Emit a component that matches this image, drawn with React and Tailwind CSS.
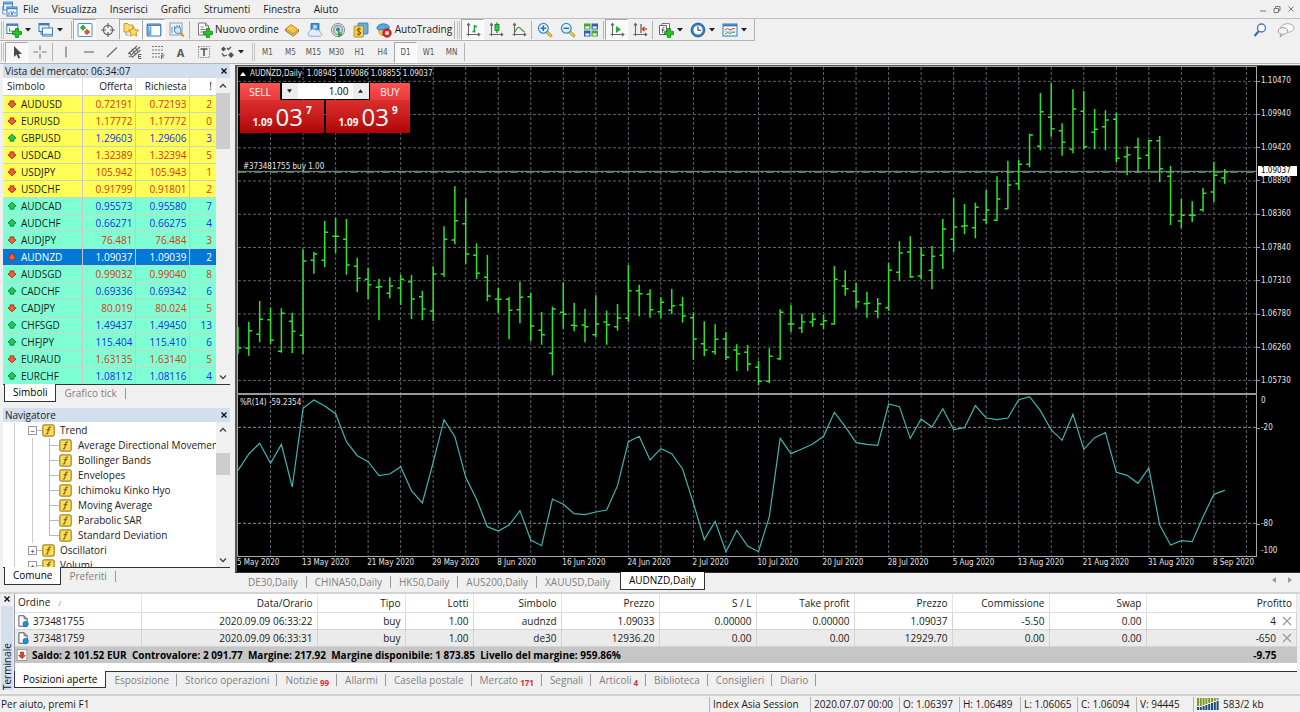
import React from "react";

/* ---------- data ---------- */

const menus = ["File", "Visualizza", "Inserisci", "Grafici", "Strumenti", "Finestra", "Aiuto"];
const timeframes = ["M1", "M5", "M15", "M30", "H1", "H4", "D1", "W1", "MN"];

// symbol, bid, ask, spread, direction, group
const quotes = [
  ["AUDUSD", "0.72191", "0.72193", 2, "down", "major"],
  ["EURUSD", "1.17772", "1.17772", 0, "down", "major"],
  ["GBPUSD", "1.29603", "1.29606", 3, "up", "major"],
  ["USDCAD", "1.32389", "1.32394", 5, "down", "major"],
  ["USDJPY", "105.942", "105.943", 1, "down", "major"],
  ["USDCHF", "0.91799", "0.91801", 2, "down", "major"],
  ["AUDCAD", "0.95573", "0.95580", 7, "up", "cross"],
  ["AUDCHF", "0.66271", "0.66275", 4, "up", "cross"],
  ["AUDJPY", "76.481", "76.484", 3, "down", "cross"],
  ["AUDNZD", "1.09037", "1.09039", 2, "down", "selected"],
  ["AUDSGD", "0.99032", "0.99040", 8, "down", "cross"],
  ["CADCHF", "0.69336", "0.69342", 6, "up", "cross"],
  ["CADJPY", "80.019", "80.024", 5, "down", "cross"],
  ["CHFSGD", "1.49437", "1.49450", 13, "up", "cross"],
  ["CHFJPY", "115.404", "115.410", 6, "up", "cross"],
  ["EURAUD", "1.63135", "1.63140", 5, "down", "cross"],
  ["EURCHF", "1.08112", "1.08116", 4, "up", "cross"],
];

const trendIndicators = [
  "Average Directional Movemen",
  "Bollinger Bands",
  "Envelopes",
  "Ichimoku Kinko Hyo",
  "Moving Average",
  "Parabolic SAR",
  "Standard Deviation",
];

const priceLabels = ["1.10470", "1.09940", "1.09420", "1.08890", "1.08360", "1.07840", "1.07310", "1.06780", "1.06260", "1.05730"];
const dateLabels = [
  "5 May 2020", "13 May 2020", "21 May 2020", "29 May 2020", "8 Jun 2020", "16 Jun 2020", "24 Jun 2020", "2 Jul 2020",
  "10 Jul 2020", "20 Jul 2020", "28 Jul 2020", "5 Aug 2020", "13 Aug 2020", "21 Aug 2020", "31 Aug 2020", "8 Sep 2020",
];

// [high, low, open, close] as plot levels, growing downwards
const barsMayJul = [
  [438, 518, 501, 501], [423, 524, 502, 449], [360, 484, 460, 415], [380, 489, 416, 478], [382, 515, 511, 397],
  [395, 516, 421, 451], [205, 519, 463, 240], [212, 278, 238, 219], [120, 258, 238, 154], [110, 215, 166, 166],
  [114, 281, 175, 252], [230, 333, 256, 292], [261, 355, 295, 311], [294, 418, 319, 317], [289, 352, 337, 315],
  [281, 372, 321, 295], [282, 414, 302, 354], [330, 418, 347, 384], [256, 420, 390, 279], [136, 288, 279, 175],
  [16, 190, 177, 119], [52, 249, 128, 219], [187, 294, 223, 277], [222, 361, 289, 345], [321, 396, 354, 355],
  [348, 475, 355, 388], [302, 427, 386, 349], [336, 481, 347, 435], [393, 491, 448, 461], [377, 583, 517, 384],
  [304, 443, 394, 400], [366, 451, 433, 434], [384, 484, 432, 437], [343, 468, 461, 429], [389, 491, 423, 431],
  [369, 449, 437, 411], [252, 422, 412, 329], [311, 406, 329, 338], [325, 410, 340, 386], [349, 412, 392, 364],
  [324, 399, 388, 374], [348, 425, 372, 405], [394, 536, 410, 474], [421, 525, 488, 507], [430, 521, 512, 475],
  [454, 537, 474, 529], [490, 570, 507, 518], [492, 570, 514, 549], [539, 613, 559, 601], [502, 607, 601, 526],
  [385, 538, 533, 394], [372, 453, 429, 429], [399, 456, 441, 423], [395, 437, 423, 415], [402, 444, 430, 419],
  [255, 431, 429, 295], [268, 344, 315, 323], [306, 381, 331, 362], [332, 410, 368, 367], [351, 412, 391, 368],
  [246, 390, 380, 268], [181, 299, 274, 216], [166, 291, 213, 287], [198, 294, 285, 223], [195, 325, 268, 226],
  [114, 264, 223, 144],
];
const barsAugSep = [
  [405, 567, 529, 492], [423, 514, 490, 488], [419, 526, 494, 433], [381, 483, 470, 441], [340, 473, 472, 408],
  [293, 438, 437, 366], [291, 381, 362, 304], [212, 313, 304, 216], [90, 262, 250, 146], [61, 221, 163, 197],
  [181, 278, 203, 238], [79, 271, 259, 138], [84, 259, 145, 251], [138, 259, 208, 199], [142, 262, 191, 171],
  [149, 297, 169, 286], [250, 337, 281, 275], [224, 328, 253, 286], [231, 318, 277, 233], [219, 358, 233, 317],
  [309, 486, 340, 456], [408, 495, 474, 457], [415, 477, 457, 457], [375, 446, 440, 391], [296, 417, 387, 337],
  [318, 362, 345, 327],
];
const shift = (rows, by) => rows.map((row) => row.map((v) => v + by));
const bars = [...shift(barsMayJul, 342), ...shift(barsAugSep, -12)];

// Williams %R levels, one per bar
const percentR = [
  256, 207, 175, 235, 178, 306, 70, 45, 63, 86, 170, 212, 230, 272, 267, 245, 317, 354, 232, 104, 155, 277, 343, 425,
  438, 420, 377, 465, 482, 342, 358, 386, 389, 381, 375, 302, 170, 154, 225, 191, 206, 252, 355, 464, 409, 500, 436,
  483, 500, 395, 160, 206, 192, 177, 154, 82, 125, 173, 178, 181, 57, 65, 160, 102, 126, 71, 134, 128, 62, 99, 104, 99,
  44, 35, 77, 135, 166, 88, 193, 158, 143, 262, 271, 295, 249, 420, 480, 467, 470, 395, 328, 316,
];

const STEP = 32.53;
const PLOT_W = 3054;

const orderColumns = [
  ["Ordine", "w-[126px]"],
  ["Data/Orario", "w-[176px]"],
  ["Tipo", "w-[88px]"],
  ["Lotti", "w-[68px]"],
  ["Simbolo", "w-[88px]"],
  ["Prezzo", "w-[98px]"],
  ["S / L", "w-[97px]"],
  ["Take profit", "w-[98px]"],
  ["Prezzo", "w-[98px]"],
  ["Commissione", "w-[97px]"],
  ["Swap", "w-[97px]"],
  ["Profitto", ""],
];
const orders = [
  ["373481755", "2020.09.09 06:33:22", "buy", "1.00", "audnzd", "1.09033", "0.00000", "0.00000", "1.09037", "-5.50", "0.00", "4"],
  ["373481759", "2020.09.09 06:33:31", "buy", "1.00", "de30", "12936.20", "0.00", "0.00", "12929.70", "0.00", "0.00", "-650"],
];

const terminalTabs = [
  ["Esposizione"], ["Storico operazioni"], ["Notizie", 99], ["Allarmi"], ["Casella postale"], ["Mercato", 171],
  ["Segnali"], ["Articoli", 4], ["Biblioteca"], ["Consiglieri"], ["Diario"],
];
const chartTabs = ["DE30,Daily", "CHINA50,Daily", "HK50,Daily", "AUS200,Daily", "XAUUSD,Daily"];

/* ---------- icons ---------- */

const Icon = ({ children, className = "w-4 h-4" }) => (
  <svg viewBox="0 0 16 16" className={`shrink-0 ${className}`} fill="none" aria-hidden="true">
    {children}
  </svg>
);

const GreenPlus = () => (
  <svg x="6" y="6" width="10" height="10" viewBox="0 0 10 10">
    <path d="M3.4.6h3.2v2.8h2.8v3.2H6.6v2.8H3.4V6.6H.6V3.4h2.8z" fill="#22c522" stroke="#0b7d12" strokeWidth=".8" />
  </svg>
);

const AppIcon = () => (
  <Icon>
    <rect x="1.5" y="1" width="9" height="8" fill="#dcebfa" stroke="#4a8ac9" />
    <path d="M1.5 2.5h9" stroke="#4a8ac9" strokeWidth="1.6" />
    <rect x="5" y="6" width="10" height="9" fill="#eef6fd" stroke="#3c7fc4" />
    <path d="M5 7.4h10" stroke="#3c7fc4" strokeWidth="1.6" />
    <path d="M7 11v3M9 10l1 4 1.5-4M13 11v2" stroke="#3c7fc4" />
    <path d="M.7 5v8h3" stroke="#6aa0d6" />
  </Icon>
);
const NewChartIcon = () => (
  <Icon>
    <rect x=".8" y="2" width="11" height="9.5" fill="#fff" stroke="#3f7dba" />
    <path d="M.8 3h11" stroke="#3f7dba" strokeWidth="1.8" />
    <path d="M3.5 5.5v4M3 9h6" stroke="#68a03f" />
    <GreenPlus />
  </Icon>
);
const ProfilesIcon = () => (
  <Icon>
    <rect x="1" y="1.5" width="10" height="8" fill="#e8f2fb" stroke="#3f7dba" />
    <path d="M1 2.5h10" stroke="#3f7dba" strokeWidth="1.8" />
    <path d="M3 12h1.5M3 9.5v3" stroke="#3f7dba" />
    <rect x="4.5" y="6" width="10" height="8" fill="#f7fbff" stroke="#3f7dba" />
    <path d="M4.5 12.5h10" stroke="#6ea2d4" strokeWidth="1.4" />
  </Icon>
);
const MarketWatchIcon = () => (
  <Icon>
    <rect x="1" y="1.5" width="14" height="13" rx="1" fill="#fff" stroke="#4a90c8" />
    <path d="M6 3l2.7 2.7L6 8.4 3.3 5.7z" fill="#32b432" stroke="#14801b" strokeWidth=".6" />
    <path d="M10 7.3l2.7 2.7-2.7 2.7L7.300 10z" fill="#ef5035" stroke="#a82512" strokeWidth=".6" />
  </Icon>
);
const TargetIcon = () => (
  <Icon>
    <circle cx="8" cy="8" r="4.6" stroke="#666" strokeWidth="1.3" />
    <path d="M8 1v5M8 10v5M1 8h5M10 8h5" stroke="#666" strokeWidth="1.2" />
  </Icon>
);
const FolderStarIcon = () => (
  <Icon>
    <path d="M1 3V1.5h4L6 3h4v7H1z" fill="#f8dd76" stroke="#b68a1f" strokeWidth=".8" />
    <path d="M3 10v3h3" stroke="#888" strokeWidth=".8" />
    <path d="M10.5 4.6l1.6 3.2 3.5.4-2.6 2.4.7 3.6-3.2-1.8-3.2 1.8.7-3.6-2.6-2.4 3.5-.4z" fill="#ffe14d" stroke="#b68415" strokeWidth=".8" />
  </Icon>
);
const PanelIcon = () => (
  <Icon>
    <rect x="1.2" y="2" width="13.6" height="12" rx="1" fill="#fff" stroke="#3778b5" strokeWidth="1.2" />
    <path d="M1.5 3.2h13" stroke="#3778b5" strokeWidth="1.4" />
    <rect x="2" y="4.4" width="3.4" height="9" fill="#6aa7de" />
    <path d="M3 6h1M3 8h1" stroke="#fff" />
  </Icon>
);
const TesterIcon = () => (
  <Icon>
    <rect x="1" y="1" width="12" height="12" fill="#eef3f8" stroke="#8aa0b5" />
    <path d="M3 11V5M5.5 10V4M8 8V3M10.5 7V3" stroke="#6a89a8" />
    <circle cx="8.8" cy="8.2" r="3.4" fill="#cfe6fa" stroke="#4d88bd" />
    <path d="M11.4 10.8l3.4 3.7" stroke="#cf9a2d" strokeWidth="2" />
  </Icon>
);
const NewOrderIcon = () => (
  <Icon>
    <path d="M1.5 1h7l3 3v9h-10z" fill="#fff" stroke="#777" />
    <path d="M8.5 1v3h3M3.5 5h3M3.5 7.5h5M3.5 10h3" stroke="#777" />
    <GreenPlus />
  </Icon>
);
const GoldBookIcon = () => (
  <Icon>
    <path d="M1.5 7L7 2.5l7.5 5.3-5.2 4.4z" fill="#f5c84c" stroke="#b07a16" strokeWidth=".8" />
    <path d="M1.5 7v2l7.7 5.3 5.3-4.5v-2l-5.2 4.4z" fill="#c98a1f" stroke="#8f6013" strokeWidth=".6" />
    <path d="M2.5 8.2l6.800 4.7 4.6-3.9" stroke="#fff2c4" strokeWidth=".7" />
  </Icon>
);
const CloudUserIcon = () => (
  <Icon>
    <path d="M4 1.5h8v7H4z" fill="#3e92dc" stroke="#2466a8" strokeWidth=".8" />
    <circle cx="8" cy="4.8" r="2" fill="#b6dcfa" />
    <path d="M3 14.3a2.6 2.6 0 010-5 3.4 3.4 0 016-1 3 3 0 014.3 2 2.1 2.1 0 010 4z" fill="#e3edf8" stroke="#7ba0c6" strokeWidth=".8" />
  </Icon>
);
const SignalIcon = () => (
  <Icon>
    <circle cx="8" cy="8" r="6.6" fill="#d9dedb" stroke="#8b9691" />
    <circle cx="8" cy="8" r="4.3" stroke="#7f9a8b" strokeWidth="1.2" />
    <path d="M8 15.5V8l4.8 5z" fill="#2fa64a" />
    <circle cx="8" cy="7.6" r="2" fill="#3d7f9e" />
  </Icon>
);
const MarketIcon = () => (
  <Icon>
    <rect x="5" y="1" width="10" height="11" rx="1" fill="#66aee4" stroke="#2f74ae" strokeWidth=".8" />
    <rect x="1" y="4" width="9.5" height="11" rx="1" fill="#f8cf4e" stroke="#a97c15" strokeWidth=".8" />
    <path d="M7.8 7.2C7 6.4 4 6.3 4 8s3.8 1.2 3.8 3-3 1.6-4 .8M5.9 5.6v8" stroke="#7b560a" />
  </Icon>
);
const AutoTradingIcon = () => (
  <Icon>
    <path d="M2.5 7.5l9-.5c.5 3-1.5 6.500-4.5 6.500S2.5 10 2.5 7.5z" fill="#f6c84a" stroke="#b38019" strokeWidth=".8" />
    <path d="M.8 6.5C1 1 12 0 13.5 5.5 14 7.5 3 9 .8 6.5z" fill="#58a8e0" stroke="#2a6ca5" strokeWidth=".8" />
    <circle cx="11" cy="11" r="4.3" fill="#dc2418" stroke="#9c130b" strokeWidth=".6" />
    <rect x="9.3" y="9.3" width="3.4" height="3.4" fill="#fff" />
  </Icon>
);
const Axes = () => <path d="M3.5 2v12M1.5 12.5h13M2 3.5l1.5-2L5 3.500M13 11l1.800 1.5L13 14" stroke="#666" strokeWidth="1.1" />;
const BarsIcon = () => (
  <Icon>
    <Axes />
    <path d="M9.5 3v7.5M9.5 4.500H12M7.5 9.5h2" stroke="#17a32b" strokeWidth="1.5" />
  </Icon>
);
const CandleIcon = () => (
  <Icon>
    <Axes />
    <path d="M9 .5V11" stroke="#127d1f" strokeWidth="1.2" />
    <rect x="7" y="2.5" width="4" height="6" fill="#2fce3d" stroke="#127d1f" strokeWidth=".8" />
  </Icon>
);
const LineIcon = () => (
  <Icon>
    <Axes />
    <path d="M4 10c2-5 4-6 6-3l3.5 3" stroke="#3e9a47" strokeWidth="1.2" />
  </Icon>
);
const ZoomIcon = ({ plus }) => (
  <Icon>
    <path d="M9.5 9.5l5 5" stroke="#9c7412" strokeWidth="3" />
    <path d="M9.5 9.5l4.7 4.7" stroke="#f2cc4d" strokeWidth="1.8" />
    <circle cx="6.3" cy="6.3" r="4.9" fill="#e3f2fd" stroke="#3c8cc9" strokeWidth="1.3" />
    <path d={plus ? "M3.5 6.3h5.6M6.3 3.5v5.6" : "M3.5 6.3h5.6"} stroke="#2270b0" strokeWidth="1.5" />
  </Icon>
);
const TilesIcon = () => (
  <Icon>
    <rect x="1" y="1.5" width="6.5" height="6" fill="#4aa832" />
    <rect x="8.5" y="1.5" width="6.5" height="6" fill="#2c62b8" />
    <rect x="1" y="8.5" width="6.5" height="6" fill="#2c62b8" />
    <rect x="8.5" y="8.5" width="6.5" height="6" fill="#4aa832" />
    <path d="M2.3 4.5h4v2h-4zM9.7 4.5h4v2h-4zM2.3 11.5h4v2h-4zM9.7 11.5h4v2h-4z" fill="#fff" />
  </Icon>
);
const AutoScrollIcon = () => (
  <Icon>
    <Axes />
    <path d="M7 4v7l5-3.5z" fill="#1fae34" />
  </Icon>
);
const ShiftIcon = () => (
  <Icon>
    <Axes />
    <path d="M9 2v9" stroke="#555" strokeWidth="1.2" />
    <path d="M15 7h-4M12.5 4.800L10.300 7l2.2 2.2" stroke="#cf4a20" strokeWidth="1.3" />
  </Icon>
);
const IndicatorsIcon = () => (
  <Icon>
    <path d="M4 3.500v-2h7.5v9H8" fill="#fff" stroke="#777" />
    <path d="M1.5 3.5h7v9h-7z" fill="#fff" stroke="#666" />
    <path d="M6.500 5.500C5 5 4.700 6 4.700 7v4M3.500 8h3" stroke="#555" />
    <GreenPlus />
  </Icon>
);
const ClockIcon = () => (
  <Icon>
    <circle cx="8" cy="8" r="6.9" fill="#2d7fcb" stroke="#15508f" strokeWidth=".8" />
    <circle cx="8" cy="8" r="4.6" fill="#fff" />
    <path d="M8 4.5v3.8h3" stroke="#333" strokeWidth="1.1" />
  </Icon>
);
const TemplateIcon = () => (
  <Icon>
    <rect x="1" y="2" width="14" height="12" fill="#f2f7fc" stroke="#3a78b8" />
    <path d="M1 3.3h14" stroke="#3a78b8" strokeWidth="2" />
    <path d="M3 8l2.5-1.5L8 8l3-1.5 2 .5" stroke="#b34b33" />
    <path d="M3 12l2.5-1.5L8 11.5l3-1.5 2 .5" stroke="#2f9a3c" />
    <path d="M2.5 9.3h11" stroke="#9ab" strokeWidth=".6" />
  </Icon>
);
const CursorIcon = () => (
  <Icon>
    <path d="M5 2v11l2.6-2.4 1.7 4 1.9-.8-1.7-3.900H13z" fill="#4a4a4a" />
  </Icon>
);
const CrossIcon = () => (
  <Icon>
    <path d="M8 1.5V6M8 10v4.5M1.5 8H6M10 8h4.5M7.5 8h1" stroke="#777" strokeWidth="1.2" />
  </Icon>
);
const StrokeIcon = ({ d }) => (
  <Icon>
    <path d={d} stroke="#666" strokeWidth="1.1" />
  </Icon>
);
const ChannelIcon = () => (
  <Icon>
    <path d="M1 10l9-8M2 13L13 3M5 13.5L13.5 6M2 8l3 5M5 5l3.5 5.5M8 3l3 5" stroke="#666" strokeWidth="1.1" />
    <path d="M14.5 10.5h-3v4h3M11.5 12.5h2.5" stroke="#555" strokeWidth=".9" />
  </Icon>
);
const FiboIcon = () => (
  <Icon>
    <path d="M2 2.5h12M2 6h12M2 9.5h12M2 13h8" stroke="#777" strokeWidth="1.2" strokeDasharray="2 1" />
    <path d="M14.5 11h-3v4M11.5 13h2.5" stroke="#555" strokeWidth=".9" />
  </Icon>
);
const LabelIcon = () => (
  <Icon>
    <rect x="2.5" y="2.5" width="11" height="11" stroke="#888" strokeDasharray="1.5 1" />
    <path d="M4.5 5h7M8 5v7" stroke="#555" strokeWidth="1.6" />
  </Icon>
);
const ArrowsIcon = () => (
  <Icon>
    <path d="M4.5 2.5L7 5 4.5 7.5 2 5z" fill="#555" />
    <path d="M12 8l3 3-3 3-3-3z" fill="#555" />
    <path d="M8 4l1.5 1.5L12 3M3 9.5L5 12l3-1" stroke="#555" strokeWidth="1.3" />
  </Icon>
);
const SearchIcon = () => (
  <Icon>
    <path d="M7 9l-4.5 5" stroke="#4068b0" strokeWidth="2.2" />
    <circle cx="9.5" cy="6" r="4" fill="#fff" stroke="#5578b8" strokeWidth="1.4" />
  </Icon>
);
const ChatIcon = () => (
  <Icon className="w-5 h-4">
    <ellipse cx="9.5" cy="6" rx="6.5" ry="4.3" fill="#fff" stroke="#aaa" />
    <ellipse cx="5" cy="9" rx="4.8" ry="3.4" fill="#f4f4f4" stroke="#999" />
    <path d="M3 12l-1 3 3.5-2.6" fill="#f4f4f4" stroke="#999" />
  </Icon>
);

const QuoteArrow = ({ dir }) => (
  <Icon className="w-[10px] h-[10px]">
    {dir === "up" ? (
      <path d="M8 2l6.500 6-3.500 1.500V13H5V9.500L1.500 8z" fill="#2fc25b" stroke="#0f8436" strokeWidth="1.5" strokeLinejoin="round" />
    ) : (
      <path d="M8 14L1.500 8 5 6.500V3h6v3.500L14.500 8z" fill="#f0603c" stroke="#b02a12" strokeWidth="1.5" strokeLinejoin="round" />
    )}
  </Icon>
);
const FunctionIcon = () => (
  <Icon className="w-[13px] h-[13px]">
    <rect x="1" y="1" width="14" height="14" rx="2" fill="#fbdc5e" stroke="#a98a1e" strokeWidth="1.5" />
    <path d="M11 4.2c-2-1-2.7.5-3 2.300L7.300 10c-.3 1.8-1 2.6-2.6 2M5.800 7h4.4" stroke="#8a6a08" strokeWidth="1.5" />
  </Icon>
);
const OrderIcon = () => (
  <Icon className="w-3 h-3.5">
    <path d="M2.5 1h7l4 4v10h-11z" fill="#fff" stroke="#555" strokeWidth="1.3" />
    <path d="M9.5 1v4h4" stroke="#555" strokeWidth="1.3" />
    <circle cx="11.5" cy="12" r="3.6" fill="#1e90e0" stroke="#0f62a8" strokeWidth=".8" />
  </Icon>
);
const BalanceIcon = () => (
  <Icon className="w-3 h-3">
    <rect x="1.5" y=".7" width="13" height="14.5" fill="#fff" stroke="#888" />
    <path d="M8 13L3.500 8.500H6V4h4v4.500h2.500z" fill="#d8452a" stroke="#96210c" strokeWidth=".8" />
  </Icon>
);
const TrafficIcon = () => (
  <svg viewBox="0 0 22 12" className="w-[22px] h-3 shrink-0" aria-hidden="true">
    {[8, 8, 7, 6, 5, 4, 3, 2].map((y, i) => (
      <g key={i}>
        <rect x={i * 2.8} y="0" width="2" height={y} fill="#7d9a2a" />
        <rect x={i * 2.8} y={y + 1} width="2" height={11 - y} fill="#1a4f7c" />
      </g>
    ))}
  </svg>
);
const SmallIcon = ({ d, stroke = "#777", width = "1" }) => (
  <svg viewBox="0 0 8 8" className="w-2 h-2" fill="none" aria-hidden="true">
    <path d={d} stroke={stroke} strokeWidth={width} />
  </svg>
);
const UP = "M1 5.5l3-3 3 3";
const DOWN = "M1 2.5l3 3 3-3";
const CLOSE = "M1.5 1.5l5 5M6.5 1.5l-5 5";

/* ---------- toolbar ---------- */

const Handle = () => <span className="w-[3px] h-[18px] mx-px border-x border-[#c4c4c4]" />;
const Sep = () => <span className="w-px h-[18px] mx-px bg-[#b4b4b4]" />;

const ToolButton = ({ label, pressed, children }) => (
  <button
    aria-label={label}
    className={`w-[23px] h-[21px] flex items-center justify-center border ${
      pressed ? "bg-[#f8f8f8] border-t-[#a8a8a8] border-l-[#a8a8a8] border-r-white border-b-white" : "border-transparent"
    }`}
  >
    {children}
  </button>
);

const DropButton = ({ label, children }) => (
  <button aria-label={label} className="w-8 h-[21px] flex items-center gap-[3px]">
    {children}
    <svg viewBox="0 0 6 4" className="w-[6px] h-1" aria-hidden="true">
      <path d="M0 0h6L3 3.5z" fill="#222" />
    </svg>
  </button>
);

const Toolbars = () => (
  <>
    <div className="h-[23px] flex items-center border-t border-[#c0c0c0]">
      <div className="flex items-center h-full border-r border-[#b4b4b4] border-b">
        <Handle />
        <span className="w-px" />
        <DropButton label="Nuovo grafico"><NewChartIcon /></DropButton>
        <DropButton label="Profili"><ProfilesIcon /></DropButton>
        <Sep />
        <ToolButton label="Vista del mercato" pressed><MarketWatchIcon /></ToolButton>
        <ToolButton label="Finestra dati"><TargetIcon /></ToolButton>
        <ToolButton label="Navigatore" pressed><FolderStarIcon /></ToolButton>
        <ToolButton label="Terminale" pressed><PanelIcon /></ToolButton>
        <ToolButton label="Strategy tester"><TesterIcon /></ToolButton>
        <Sep />
        <button className="flex items-center gap-[2px] pl-[6px] pr-[2px]">
          <NewOrderIcon />
          Nuovo ordine
        </button>
        <ToolButton label="MetaEditor"><GoldBookIcon /></ToolButton>
        <ToolButton label="Hosting"><CloudUserIcon /></ToolButton>
        <ToolButton label="Segnali"><SignalIcon /></ToolButton>
        <ToolButton label="Mercato"><MarketIcon /></ToolButton>
        <button className="flex items-center gap-[3px] pl-[3px] pr-px">
          <AutoTradingIcon />
          AutoTrading
        </button>
        <Sep />
        <Handle />
        <ToolButton label="Grafico a barre" pressed><BarsIcon /></ToolButton>
        <ToolButton label="Candele"><CandleIcon /></ToolButton>
        <ToolButton label="Grafico a linea"><LineIcon /></ToolButton>
        <Sep />
        <ToolButton label="Zoom avanti"><ZoomIcon plus /></ToolButton>
        <ToolButton label="Zoom indietro"><ZoomIcon /></ToolButton>
        <ToolButton label="Affianca finestre"><TilesIcon /></ToolButton>
        <Sep />
        <ToolButton label="Scorrimento automatico" pressed><AutoScrollIcon /></ToolButton>
        <ToolButton label="Spostamento grafico"><ShiftIcon /></ToolButton>
        <Sep />
        <span className="w-1" />
        <DropButton label="Indicatori"><IndicatorsIcon /></DropButton>
        <DropButton label="Periodi"><ClockIcon /></DropButton>
        <DropButton label="Modelli"><TemplateIcon /></DropButton>
      </div>
      <div className="flex items-center gap-2 ml-auto pr-1">
        <button aria-label="Cerca"><SearchIcon /></button>
        <button aria-label="Chat"><ChatIcon /></button>
      </div>
    </div>
    <div className="h-[23px] flex items-center border-b border-[#b4b4b4]">
      <Handle />
      <ToolButton label="Cursore" pressed><CursorIcon /></ToolButton>
      <ToolButton label="Mirino"><CrossIcon /></ToolButton>
      <Sep />
      <ToolButton label="Linea verticale"><StrokeIcon d="M8 2.5v11" /></ToolButton>
      <ToolButton label="Linea orizzontale"><StrokeIcon d="M3 8h10" /></ToolButton>
      <ToolButton label="Linea di tendenza"><StrokeIcon d="M3 13l10-9.5" /></ToolButton>
      <ToolButton label="Canale"><ChannelIcon /></ToolButton>
      <ToolButton label="Fibonacci"><FiboIcon /></ToolButton>
      <ToolButton label="Testo"><span className="font-bold text-[11px] text-[#555]">A</span></ToolButton>
      <ToolButton label="Etichetta"><LabelIcon /></ToolButton>
      <span className="w-1" />
      <DropButton label="Frecce"><ArrowsIcon /></DropButton>
      <Handle />
      {timeframes.map((tf) => (
        <ToolButton key={tf} label={tf} pressed={tf === "D1"}>
          <span className="[font-family:'DejaVu_Sans_Condensed','DejaVu_Sans',sans-serif] text-[8px] text-[#555]">{tf}</span>
        </ToolButton>
      ))}
      <Sep />
    </div>
  </>
);

/* ---------- left side ---------- */

const PanelTitle = ({ children }) => (
  <div className="h-[14px] flex items-center justify-between pl-[2px] pr-[2px] bg-[#d3dfec]">
    <h2 className="leading-[14px]">{children}</h2>
    <button aria-label="Chiudi"><SmallIcon d={CLOSE} stroke="#111" width="1.4" /></button>
  </div>
);

const ScrollBar = ({ thumb }) => (
  <div className="w-[14px] shrink-0 flex flex-col items-center bg-[#f0f0f0]">
    <span className="h-[15px] flex items-center"><SmallIcon d={UP} stroke="#444" width="1.3" /></span>
    <span className={`w-full bg-[#cdcdcd] ${thumb}`} />
    <span className="h-[15px] mt-auto flex items-center"><SmallIcon d={DOWN} stroke="#444" width="1.3" /></span>
  </div>
);

const SideTabs = ({ active, other }) => (
  <div className="flex items-start pl-px border-t border-[#333] text-[#808080]">
    <button className="h-[18px] -mt-px px-2 bg-white text-black border border-t-0 border-[#333]">{active}</button>
    <button className="h-[17px] flex items-center px-2 after:h-[11px] after:ml-2 after:-mr-2 after:border-r after:border-[#999]">
      {other}
    </button>
  </div>
);

const rowColors = {
  major: "bg-[#ffff55]",
  cross: "bg-[#7fffd4]",
  selected: "bg-[#0078d7] text-white",
};

const MarketWatch = () => (
  <section>
    <PanelTitle>Vista del mercato: 06:34:07</PanelTitle>
    <div className="flex bg-white">
      <table className="flex-1 table-fixed border-collapse leading-4">
        <thead>
          <tr className="h-[17px]">
            <th className="w-[79px] p-0 pl-1 font-normal text-left border-r border-[#e0e0e0]">Simbolo</th>
            <th className="w-[53px] p-0 pr-[2px] font-normal text-right border-r border-[#e0e0e0]">Offerta</th>
            <th className="w-[54px] p-0 pr-[2px] font-normal text-right border-r border-[#e0e0e0]">Richiesta</th>
            <th className="w-[27px] p-0 pr-1 font-normal text-right">!</th>
          </tr>
        </thead>
        <tbody>
          {quotes.map(([symbol, bid, ask, spread, dir, group]) => {
            const color = group === "selected" ? "text-white" : dir === "up" ? "text-[#1a2fe0]" : "text-[#dd3311]";
            const cell = `p-0 text-right border-[#c8c8c8] ${color}`;
            return (
              <tr key={symbol} className={`h-[17px] border-t border-[#c8d8c0] ${rowColors[group]}`}>
                <td className="p-0 pl-1 border-r border-[#c8c8c8]">
                  <span className="flex items-center gap-1">
                    <QuoteArrow dir={dir} />
                    {symbol}
                  </span>
                </td>
                <td className={`${cell} pr-[2px] border-r`}>{bid}</td>
                <td className={`${cell} pr-[2px] border-r`}>{ask}</td>
                <td className={`${cell} pr-1`}>{spread}</td>
              </tr>
            );
          })}
        </tbody>
      </table>
      <ScrollBar thumb="h-14" />
    </div>
    <SideTabs active="Simboli" other="Grafico tick" />
  </section>
);

const TreeGroup = ({ label, sign }) => (
  <li className="h-[15px] flex items-center">
    <span className="w-[14px] h-full ml-[11px] border-l border-[#ccc]" />
    <span className="w-[9px] h-[9px] flex items-center justify-center bg-white border border-[#999] text-[8px] leading-none">
      {sign}
    </span>
    <span className="w-[5px] h-px bg-[#bbb]" />
    <FunctionIcon />
    <span className="pl-[5px]">{label}</span>
  </li>
);

const Navigator = () => (
  <section>
    <PanelTitle>Navigatore</PanelTitle>
    <div className="h-[145px] flex bg-white">
      <ul className="flex-1 min-w-0 pt-px overflow-hidden whitespace-nowrap leading-[15px]">
        <TreeGroup label="Trend" sign="−" />
        {trendIndicators.map((name, i) => (
          <li key={name} className="h-[15px] flex items-center">
            <span className="w-[18px] h-full ml-[11px] shrink-0 border-l border-[#ccc]" />
            <span className="w-[17px] h-full shrink-0 border-l border-[#ccc]" />
            <span className={`w-px shrink-0 bg-[#bbb] ${i === trendIndicators.length - 1 ? "h-2 self-start" : "h-full"}`} />
            <span className="w-[9px] h-px shrink-0 bg-[#bbb]" />
            <FunctionIcon />
            <span className="pl-[6px]">{name}</span>
          </li>
        ))}
        <TreeGroup label="Oscillatori" sign="+" />
        <TreeGroup label="Volumi" sign="+" />
      </ul>
      <ScrollBar thumb="h-[22px] mt-4" />
    </div>
    <SideTabs active="Comune" other="Preferiti" />
  </section>
);

/* ---------- chart ---------- */

const verticals = Array.from({ length: 31 }, (_, i) => (i + 1) * 3 * STEP);
const VerticalGrid = ({ height }) => (
  <path
    d={verticals.map((x) => `M${x} 0V${height}`).join("")}
    stroke="#5c626a"
    strokeDasharray="3 2"
    vectorEffect="non-scaling-stroke"
  />
);

const PricePlot = () => (
  <svg viewBox={`0 0 ${PLOT_W} 978`} preserveAspectRatio="none" className="block w-full h-[326px]" fill="none" role="img" aria-label="AUDNZD Daily">
    <VerticalGrid height={978} />
    <path
      d={priceLabels.map((_, i) => `M0 ${43 + i * 99.7}H${PLOT_W}`).join("")}
      stroke="#5c626a"
      strokeDasharray="3 2"
      vectorEffect="non-scaling-stroke"
    />
    <path d={`M0 313H${PLOT_W}`} stroke="#8a94a0" vectorEffect="non-scaling-stroke" />
    <path d={`M0 316H${PLOT_W}`} stroke="#4f9a58" strokeDasharray="8 3 2 3" vectorEffect="non-scaling-stroke" />
    <path
      d={bars
        .map(([high, low, open, close], i) => {
          const x = i * STEP;
          return `M${x} ${high}V${low}M${x - 10} ${open}H${x}M${x} ${close}H${x + 10}`;
        })
        .join("")}
      stroke="#2be32b"
      strokeWidth="1.5"
      vectorEffect="non-scaling-stroke"
    />
  </svg>
);

const IndicatorPlot = () => (
  <svg viewBox={`0 0 ${PLOT_W} 483`} preserveAspectRatio="none" className="block w-full h-[161px]" fill="none" role="img" aria-label="Williams %R">
    <VerticalGrid height={483} />
    <path d={`M0 97H${PLOT_W}M0 385H${PLOT_W}`} stroke="#8a8f96" strokeDasharray="3 2" vectorEffect="non-scaling-stroke" />
    <polyline
      points={percentR.map((y, i) => `${i * STEP},${y - 30}`).join(" ")}
      stroke="#3fb5b0"
      strokeWidth="1.2"
      vectorEffect="non-scaling-stroke"
    />
  </svg>
);

const DealButton = ({ side, big, pip }) => (
  <button
    aria-label={side}
    className="h-[33px] flex-1 flex items-start justify-center text-white bg-linear-to-b from-[#dc2e2e] to-[#b00202]"
  >
    <span className="pt-[15px] font-bold text-[10px] leading-[14px]">1.09</span>
    <span className="px-[3px] text-[24px] leading-[34px]">{big}</span>
    <span className="pt-1 font-bold text-[10px] leading-3">{pip}</span>
  </button>
);

const OneClickPanel = () => (
  <div className="absolute left-[2px] top-4 w-[170px] [font-family:'Open_Sans','Noto_Sans',sans-serif]">
    <div className="h-[17px] flex items-start justify-between text-white text-[10px]">
      <button className="w-10 h-[17px] bg-linear-to-b from-[#ff5252] to-[#e63a3a]">SELL</button>
      <div className="w-[87px] h-4 flex items-center bg-white text-black">
        <button aria-label="Riduci volume" className="w-4 h-full flex items-center justify-center bg-[#ececec]">
          <svg viewBox="0 0 6 4" className="w-[5px] h-1"><path d="M0 0h6L3 4z" fill="#222" /></svg>
        </button>
        <input aria-label="Volume" defaultValue="1.00" className="flex-1 min-w-0 h-full pr-1 text-right outline-none" />
        <button aria-label="Aumenta volume" className="w-4 h-full flex items-center justify-center bg-[#ececec]">
          <svg viewBox="0 0 6 4" className="w-[5px] h-1"><path d="M0 4h6L3 0z" fill="#222" /></svg>
        </button>
      </div>
      <button className="w-10 h-[17px] bg-linear-to-b from-[#ff5252] to-[#e63a3a]">BUY</button>
    </div>
    <div className="flex gap-[2px]">
      <DealButton side="Sell 1.09037" big="03" pip="7" />
      <DealButton side="Buy 1.09039" big="03" pip="9" />
    </div>
  </div>
);

const AxisLabel = ({ children, tick = true }) => (
  <span className="flex items-center gap-px">
    <span className={`w-[3px] h-px ${tick ? "bg-[#999]" : ""}`} />
    {children}
  </span>
);

const Chart = () => (
  <div className="bg-black border-l-2 border-t border-[#555] text-[#e4e4e4] [font-family:'DejaVu_Sans_Condensed','DejaVu_Sans',sans-serif] text-[8px] leading-[10px]">
    <div className="flex">
      <div className="relative flex-1 min-w-0 border border-b-0 border-[#a8a8a8]">
        <PricePlot />
        <p className="absolute left-[2px] top-[2px] flex items-center gap-1">
          <svg viewBox="0 0 6 4" className="w-[6px] h-1"><path d="M0 4h6L3 0z" fill="#fff" /></svg>
          AUDNZD,Daily&nbsp; 1.08945 1.09086 1.08855 1.09037
        </p>
        <OneClickPanel />
        <p className="absolute left-[5px] top-[95px]">#373481755 buy 1.00</p>
      </div>
      <div className="relative w-[43px] h-[327px] pt-[10px] flex flex-col">
        <div className="h-[310px] flex flex-col justify-between">
          {priceLabels.map((label) => (
            <AxisLabel key={label}>{label}</AxisLabel>
          ))}
        </div>
        <span className="absolute left-px top-[100px] w-[39px] pl-[3px] bg-white text-black">1.09037</span>
      </div>
    </div>
    <div className="h-[2px] mr-[43px] bg-[#999]" />
    <div className="flex">
      <div className="relative flex-1 min-w-0 border-x border-b border-[#a8a8a8]">
        <IndicatorPlot />
        <p className="absolute left-[2px] top-[3px]">%R(14) -59.2354</p>
      </div>
      <div className="w-[43px] flex flex-col leading-3">
        <AxisLabel tick={false}>0</AxisLabel>
        <span className="h-[15px]" />
        <AxisLabel>-20</AxisLabel>
        <span className="h-[84px]" />
        <AxisLabel>-80</AxisLabel>
        <span className="h-[15px]" />
        <AxisLabel tick={false}>-100</AxisLabel>
      </div>
    </div>
    <div className="h-[15px] mr-[43px] pt-px whitespace-nowrap flex">
      {dateLabels.map((label, i) => (
        <span key={label} className={i === dateLabels.length - 1 ? "w-0 grow-[44] basis-0" : "w-0 grow-[65] basis-0"}>
          {label}
        </span>
      ))}
    </div>
  </div>
);

const ChartTabs = () => (
  <div className="h-5 flex items-start pl-[5px] pr-2 border-t border-[#333] text-[#808080]">
    {chartTabs.map((tab) => (
      <button key={tab} className="h-3 mt-[3px] px-2 leading-3 border-r border-[#999] nth-5:border-r-0">
        {tab}
      </button>
    ))}
    <button className="h-[18px] ml-[2px] px-2 -mt-px bg-white text-black border border-t-0 border-[#333]">AUDNZD,Daily</button>
    <span className="flex gap-3 ml-auto pt-1">
      <svg viewBox="0 0 4 6" className="w-1 h-[6px]"><path d="M4 0v6L0 3z" fill="#999" /></svg>
      <svg viewBox="0 0 4 6" className="w-1 h-[6px]"><path d="M0 0v6l4-3z" fill="#999" /></svg>
    </span>
  </div>
);

/* ---------- terminal ---------- */

const Terminal = () => (
  <section className="flex border-t-2 border-[#d4d4d4]">
    <div className="w-[14px] shrink-0 flex flex-col items-center">
      <button aria-label="Chiudi terminale" className="pt-px">
        <SmallIcon d={CLOSE} stroke="#111" width="1.4" />
      </button>
      <h2 className="flex-1 w-3 mt-[3px] mb-1 flex items-center bg-[#d3dfec] leading-3 [writing-mode:vertical-rl] rotate-180">Terminale</h2>
    </div>
    <div className="flex-1 min-w-0 pr-[3px]">
      <div className="bg-white border-l border-[#999] pb-2">
        <table className="w-full table-fixed border-collapse leading-4">
          <thead>
            <tr className="h-[18px] border-b border-[#dcdcdc]">
              {orderColumns.map(([name, width], i) => (
                <th
                  key={i}
                  className={`p-0 font-normal border-r border-[#e4e4e4] ${width} ${i === 0 ? "pl-[3px] text-left" : "pr-1 text-right"}`}
                >
                  {name}
                  {i === 0 && <span className="pl-2 text-[8px] text-[#888]">/</span>}
                </th>
              ))}
            </tr>
          </thead>
          <tbody>
            {orders.map((order, row) => (
              <tr key={order[0]} className={`h-[17px] ${row % 2 ? "bg-[#ebebeb]" : ""}`}>
                {order.map((value, i) => (
                  <td key={i} className={`p-0 border-r border-b border-[#d4d4d4] ${i === 0 ? "pl-[2px]" : "pr-1 text-right"}`}>
                    {i === 0 && (
                      <span className="flex items-center gap-1">
                        <OrderIcon />
                        {value}
                      </span>
                    )}
                    {i > 0 && i < 11 && value}
                    {i === 11 && (
                      <span className="flex items-center justify-end gap-[6px]">
                        {value}
                        <button aria-label={`Chiudi ${order[0]}`}>
                          <svg viewBox="0 0 10 10" className="w-[10px] h-[10px]">
                            <path d="M1 1l8 8M9 1L1 9" stroke="#999" strokeWidth="1.2" />
                          </svg>
                        </button>
                      </span>
                    )}
                  </td>
                ))}
              </tr>
            ))}
            <tr className="h-[17px] bg-[#c6c6c6] font-bold text-black">
              <td colSpan={11} className="p-0 pl-px">
                <span className="flex items-center gap-1 whitespace-pre">
                  <BalanceIcon />
                  {"Saldo: 2 101.52 EUR  Controvalore: 2 091.77  Margine: 217.92  Margine disponibile: 1 873.85  Livello del margine: 959.86%"}
                </span>
              </td>
              <td className="p-0 pr-5 text-right">-9.75</td>
            </tr>
          </tbody>
        </table>
      </div>
      <div className="h-[23px] flex items-start border-t border-[#333] text-[#808080]">
        <button className="h-[17px] -mt-px px-2 bg-white text-black border border-t-0 border-[#333]">Posizioni aperte</button>
        {terminalTabs.map(([name, count]) => (
          <button key={name} className="h-3 mt-[2px] pl-2 pr-[7px] leading-3 border-r border-[#999]">
            {name}
            {count && <sub className="pl-[2px] font-bold text-[8px] leading-none text-[#e0283c]">{count}</sub>}
          </button>
        ))}
      </div>
    </div>
  </section>
);

const StatusCell = ({ width, children }) => (
  <span className={`h-[15px] flex items-center gap-1 pl-[3px] border-l border-[#b4b4b4] ${width}`}>{children}</span>
);

const StatusBar = () => (
  <footer className="h-[18px] flex items-center border-t-2 border-[#d0d0d0]">
    <span className="pl-px">Per aiuto, premi F1</span>
    <div className="flex ml-auto">
      <StatusCell width="w-[101px]">Index Asia Session</StatusCell>
      <StatusCell width="w-[89px]">2020.07.07 00:00</StatusCell>
      <StatusCell width="w-[60px]">O: 1.06397</StatusCell>
      <StatusCell width="w-[61px]">H: 1.06489</StatusCell>
      <StatusCell width="w-[57px]">L: 1.06065</StatusCell>
      <StatusCell width="w-[59px]">C: 1.06094</StatusCell>
      <StatusCell width="w-[57px]">V: 94445</StatusCell>
      <StatusCell width="w-[107px]">
        <TrafficIcon />
        583/2 kb
      </StatusCell>
    </div>
  </footer>
);

const App = () => {
  return (
    <div className="min-h-screen bg-[#f0f0f0] text-[#1a1a1a] [font-family:'Open_Sans','Noto_Sans',sans-serif] text-[10px] leading-[15px]">
      <header>
        <div className="h-[18px] flex items-center pl-[2px]">
          <AppIcon />
          <nav className="flex gap-[13px] pl-[5px]">
            {menus.map((menu) => (
              <button key={menu}>{menu}</button>
            ))}
          </nav>
          <div className="flex items-center gap-[6px] ml-auto pr-[5px]">
            <button aria-label="Riduci"><SmallIcon d="M1 6h6" /></button>
            <button aria-label="Ripristina"><SmallIcon d="M1 3.5h4.5v4H1zM2.5 3.5v-2H7v4H5.500" /></button>
            <button aria-label="Chiudi"><SmallIcon d={CLOSE} /></button>
          </div>
        </div>
        <Toolbars />
      </header>

      <main className="flex">
        <aside className="w-[235px] shrink-0 pl-[3px] pr-[5px] flex flex-col gap-[6px]">
          <MarketWatch />
          <Navigator />
        </aside>
        <div className="flex-1 min-w-0 pt-px">
          <Chart />
          <ChartTabs />
        </div>
      </main>

      <Terminal />
      <StatusBar />
    </div>
  );
};

export default App;
